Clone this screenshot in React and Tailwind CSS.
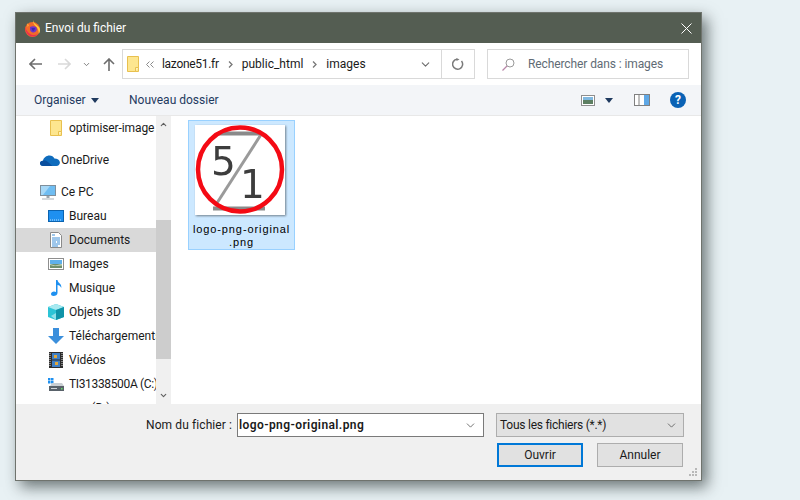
import React from "react";
import { ChevronDown } from "lucide-react";

const font = "[font-family:'Roboto','Open_Sans',sans-serif]";

/* small win10 style icons */
const FolderIcon = () => (
    <svg width="12" height="16" viewBox="0 0 12 16">
        <path d="M.5.5h11v15H.5z" fill="#fde68f" stroke="#e8c04f" />
        <path d="M8.500 15.500v-4h3" fill="#fff3c0" stroke="#e8c04f" />
    </svg>
);

const Firefox = () => (
    <svg width="17" height="17" viewBox="0 0 17 17">
        <circle cx="8.500" cy="9.500" r="7.500" fill="#f26a2a" />
        <path d="M9 0c.5 2 1 3 3 4.500 2 1.500 4 3 4 5.500 0 1.500-.5 2.800-1.200 3.800C15 9 12.500 7 11 5.500 9.500 4 9 2 9 0z" fill="#ffcb3a" />
        <path d="M1 7c0 5 3.500 9.500 7.500 9.500 2.500 0 4.500-1 6-2.800-3 2-6.500 1.800-9-.2C3.500 12 2 9.500 1 7z" fill="#ee2f4f" />
        <path d="M6 7c1.500-1 4.500-1 6 0 1 1 1 2.500.5 3.500-.8 1.700-2.800 2.300-4.300 1.700C6.800 11.600 6 10.500 6 9z" fill="#6f35c9" />
        <path d="M7.500 8h3.500l-.5 2-1.500 1.200L8 9.800z" fill="#3c2bb0" />
        <path d="M3 3.500c1 0 1.500 1 2 2L3.500 7z" fill="#ffa436" />
    </svg>
);

const OneDrive = () => (
    <svg width="20" height="11" viewBox="0 0 20 11">
        <path d="M3.500 11C1.200 11 0 9.600 0 8.200 0 6.900 1.200 5.900 3 5.700 3.600 2.600 6.500.5 9.400.5c2.400 0 4.100 1 5 2.900 3 0 5.300 1.500 5.500 3.800.1 2-1.500 3.800-3.500 3.800z" fill="#0f6cbd" />
        <path d="M3.500 11C1.200 11 0 9.600 0 8.200 0 6.900 1.200 5.900 3 5.700c2.300-.3 3.500.3 4.700 1l4.700 4.300z" fill="#0a4f9e" />
    </svg>
);

const Monitor = () => (
    <svg width="16" height="15" viewBox="0 0 16 15">
        <rect x=".5" y=".5" width="15" height="10" fill="#6fbdf2" stroke="#7f8f9c" />
        <path d="M1 1h9L3 10H1z" fill="#a7d8f7" />
        <path d="M6.500 11h3v2h-3z" fill="#9aa5ad" />
        <path d="M2 13.500h12v1H2z" fill="#aab2b8" />
    </svg>
);

const Desktop = () => (
    <svg width="16" height="12" viewBox="0 0 16 12">
        <rect x=".5" y=".5" width="15" height="11" fill="#1e90f0" stroke="#0b63b0" />
        <path d="M2 10h12" stroke="#bfe2fb" strokeDasharray="1 1" />
    </svg>
);

const DocIcon = () => (
    <svg width="12" height="16" viewBox="0 0 12 16">
        <path d="M.5.500h8l3 3v12H.500z" fill="#fff" stroke="#8a8a8a" />
        <path d="M2 3h3M2 6h8M2 8h8M2 10h4M7 10h3M2 12h8M2 14h6" stroke="#3f8fd8" />
    </svg>
);

const ImageIcon = () => (
    <svg width="16" height="12" viewBox="0 0 16 12">
        <rect x=".5" y=".5" width="15" height="11" fill="#fff" stroke="#8e8e8e" />
        <rect x="2" y="2" width="12" height="4" fill="#5fb0ea" />
        <path d="M2 6h12v4H2z" fill="#6f8f6b" />
        <path d="M2 6l5 1.500L14 6v1.500L6 8 2 7z" fill="#c9d8c2" />
    </svg>
);

const Music = () => (
    <svg width="11" height="16" viewBox="0 0 11 16">
        <path d="M5 0h1.500c.3 3 4.500 3.500 3.800 8C9.500 6 8 5 6.500 5v8c0 2-2 3-4 3-1.500 0-2.500-.8-2.500-2 0-1.500 1.500-2.500 3-2.500.8 0 1.500.2 2 .5z" fill="#1e90f0" />
    </svg>
);

const Cube = () => (
    <svg width="16" height="16" viewBox="0 0 16 16">
        <path d="M8 0l8 3v10l-8 3-8-3V3z" fill="#2cc4d6" />
        <path d="M8 0l8 3-8 3-8-3z" fill="#a8e9f0" />
        <path d="M8 6l8-3v10l-8 3z" fill="#0f93a8" />
        <path d="M3 12l5-3v7z" fill="#8fe0ea" />
    </svg>
);

const Download = () => (
    <svg width="16" height="16" viewBox="0 0 16 16">
        <path d="M5 0h6v8h5l-8 8-8-8h5z" fill="#3b8fdc" />
    </svg>
);

const Film = () => (
    <svg width="14" height="16" viewBox="0 0 14 16">
        <rect width="14" height="16" fill="#2b2b2b" />
        <rect x="3" y="1" width="8" height="6.500" fill="#3f7fc4" />
        <rect x="3" y="8.500" width="8" height="6.500" fill="#3f7fc4" />
        <path d="M5 3h3v3H5zM6 10h3v3H6z" fill="#e0a63a" />
        <path d="M1 1v14M13 1v14" stroke="#ddd" strokeDasharray="1 1" />
    </svg>
);

const Drive = () => (
    <svg width="16" height="15" viewBox="0 0 16 15">
        <path d="M0 1h2.500v2.500H0zM3 1h2.500v2.500H3zM0 4h2.500v2.500H0zM3 4h2.500v2.500H3z" fill="#1e90f0" />
        <path d="M2 9l2-3h10l2 3z" fill="#c9ced2" />
        <rect y="9" x="1" width="15" height="5" fill="#59626a" />
        <path d="M3 11.500h6" stroke="#cfd4d8" />
        <rect x="13" y="11" width="1.500" height="1.500" fill="#63e06a" />
    </svg>
);

const Logo = () => (
    <svg width="93" height="92" viewBox="0 0 93 92" className="drop-shadow-[1px_1px_1px_rgba(0,0,0,0.45)]">
        <rect width="90" height="90" fill="#fff" />
        <path d="M23 8.500h44M18 83.500h52" stroke="#8a8a8a" strokeWidth="4" />
        <path d="M67 8L22 78" stroke="#9a9a9a" strokeWidth="3" />
        <text x="16" y="50" fontSize="39" fill="#3d3d3d" fontFamily="DejaVu Sans" fontWeight="400">5</text>
        <text x="45" y="73" fontSize="39" fill="#3d3d3d" fontFamily="DejaVu Sans" fontWeight="400">1</text>
        <circle cx="45" cy="44.500" r="42" fill="none" stroke="#f40a14" strokeWidth="4.500" />
    </svg>
);

const treeRows = [
    { icon: <FolderIcon />, label: "optimiser-image", indent: "pl-[32px]", gap: "mb-2", text: "tracking-[-0.1px]" },
    { icon: <OneDrive />, label: "OneDrive", indent: "pl-[24px]", gap: "mb-2", col: "w-5 mr-[1px]" },
    { icon: <Monitor />, label: "Ce PC", indent: "pl-[24px]" },
    { icon: <Desktop />, label: "Bureau", indent: "pl-[32px]" },
    { icon: <DocIcon />, label: "Documents", indent: "pl-[32px]", active: true },
    { icon: <ImageIcon />, label: "Images", indent: "pl-[32px]" },
    { icon: <Music />, label: "Musique", indent: "pl-[32px]" },
    { icon: <Cube />, label: "Objets 3D", indent: "pl-[32px]" },
    { icon: <Download />, label: "Téléchargements", indent: "pl-[32px]" },
    { icon: <Film />, label: "Vidéos", indent: "pl-[32px]" },
    { icon: <Drive />, label: "TI31338500A (C:)", indent: "pl-[32px]", text: "tracking-[-0.35px]" },
    { icon: null, label: "nas (D:)", indent: "pl-[32px]" },
];

function TreeRow({ row }) {
    return (
        <div className={`h-6 shrink-0 flex items-center ${row.indent} ${row.gap || ""} ${row.active ? "bg-[#d9d9d9]" : ""}`}>
            <span className={`shrink-0 flex justify-center ${row.col || "w-4 mr-[5px]"}`}>{row.icon}</span>
            <span className={`whitespace-nowrap ${row.text || ""}`}>{row.label}</span>
        </div>
    );
}

export default function App() {
    return (
        <div className={`w-[800px] h-[500px] overflow-hidden bg-[#e8f1f4] pl-[15px] pt-[12px] text-xs text-[#1a1a1a] ${font}`}>
            <div className="w-[687px] h-[469px] flex flex-col border border-[#6f736d] bg-white shadow-[5px_6px_14px_rgba(40,50,50,0.65)]">
                {/* Title bar */}
                <div className="h-[30px] shrink-0 bg-[#545d52] flex items-center pl-[8px] pr-[9px] text-white">
                    <Firefox />
                    <span className="ml-[4px] flex-1">Envoi du fichier</span>
                    <svg width="11" height="11" viewBox="0 0 11 11">
                        <path d="M.5.5l10 10M10.500.500l-10 10" stroke="#fff" strokeWidth="1" />
                    </svg>
                </div>

                {/* Nav row */}
                <div className="h-[42px] shrink-0 flex items-center pl-[13px] pr-[12px]">
                    <svg width="13" height="12" viewBox="0 0 13 12">
                        <path d="M6 1L1 6l5 5M1 6h12" fill="none" stroke="#6d6d6d" strokeWidth="1.600" />
                    </svg>
                    <svg width="13" height="12" viewBox="0 0 13 12" className="ml-[16px]">
                        <path d="M7 1l5 5-5 5M12 6H0" fill="none" stroke="#d9d9d9" strokeWidth="1.600" />
                    </svg>
                    <ChevronDown size={9} strokeWidth={2.5} className="ml-[11px] text-[#7a7a7a]" />
                    <svg width="12" height="13" viewBox="0 0 12 13" className="ml-[12px]">
                        <path d="M1 6l5-5 5 5M6 1v12" fill="none" stroke="#6d6d6d" strokeWidth="1.600" />
                    </svg>
                    <div className="ml-[7px] w-[353px] h-[30px] border border-[#d9d9d9] flex items-center pl-[4px]">
                        <FolderIcon />
                        <svg width="8" height="7" viewBox="0 0 8 7" className="ml-[7px]">
                            <path d="M3.500.5L.5 3.500l3 3M7.500.5l-3 3 3 3" fill="none" stroke="#8a8a8a" />
                        </svg>
                        <span className="ml-[8px] tracking-[-0.3px]">lazone51.fr</span>
                        <svg width="5" height="7" viewBox="0 0 5 7" className="ml-[9px]"><path d="M1 .5l3 3-3 3" fill="none" stroke="#777" strokeWidth="1.300" /></svg>
                        <span className="ml-[9px]">public_html</span>
                        <svg width="5" height="7" viewBox="0 0 5 7" className="ml-[9px]"><path d="M1 .5l3 3-3 3" fill="none" stroke="#777" strokeWidth="1.300" /></svg>
                        <span className="ml-[9px] flex-1">images</span>
                        <ChevronDown size={13} strokeWidth={2} className="mr-[9px] text-[#6d6d6d]" />
                        <div className="w-[33px] h-full border-l border-[#d9d9d9] flex items-center justify-center">
                            <svg width="12" height="12" viewBox="0 0 12 12">
                                <path d="M9.500 3A5 5 0 1 1 5 1.200" fill="none" stroke="#7a7a7a" strokeWidth="1.500" />
                                <path d="M4.500 0l3 1.500-3 1.500z" fill="#7a7a7a" />
                            </svg>
                        </div>
                    </div>
                    <div className="ml-[12px] w-[202px] h-[30px] border border-[#d9d9d9] flex items-center pl-[14px] text-[#5f6b75]">
                        <svg width="13" height="13" viewBox="0 0 13 13">
                            <circle cx="8" cy="5" r="4" fill="none" stroke="#9a9a9a" />
                            <path d="M5 8l-4.500 4.500" stroke="#b886a8" strokeWidth="1.200" />
                        </svg>
                        <span className="ml-[13px] tracking-[-0.1px]">Rechercher dans : images</span>
                    </div>
                </div>

                {/* Toolbar */}
                <div className="h-[31px] shrink-0 bg-[#f3f5f8] border-b border-[#e8e8e8] flex items-center pl-[18px] pr-[15px] text-[#1f3a5f]">
                    <span className="w-[51px]">Organiser</span>
                    <svg width="8" height="5" viewBox="0 0 8 5" className="ml-[6px]"><path d="M0 0h8L4 5z" fill="#1f3a5f" /></svg>
                    <span className="ml-[30px] flex-1">Nouveau dossier</span>
                    <svg width="14" height="11" viewBox="0 0 14 11">
                        <rect x=".5" y=".5" width="13" height="10" fill="#fff" stroke="#8e8e8e" />
                        <rect x="2" y="2" width="10" height="3" fill="#7fb8e0" />
                        <rect x="2" y="5" width="10" height="4" fill="#5d7f62" />
                    </svg>
                    <svg width="8" height="5" viewBox="0 0 8 5" className="ml-[10px]"><path d="M0 0h8L4 5z" fill="#1f3a5f" /></svg>
                    <svg width="16" height="12" viewBox="0 0 16 12" className="ml-[21px]">
                        <rect x=".5" y=".5" width="15" height="11" fill="#fff" stroke="#808080" />
                        <path d="M5 0v12" stroke="#808080" />
                        <rect x="10" y="1" width="5" height="10" fill="#5fa8e6" />
                    </svg>
                    <div className="ml-[20px] w-4 h-4 rounded-full bg-[#0a62b5] flex items-center justify-center text-white text-[12px] font-bold leading-none">?</div>
                </div>

                {/* Content */}
                <div className="flex-1 min-h-0 flex">
                    <div className="w-[140px] shrink-0 overflow-hidden flex flex-col text-[#1a1a1a]">
                        {treeRows.map((row) => (
                            <TreeRow key={row.label} row={row} />
                        ))}
                    </div>
                    <div className="w-[15px] shrink-0 bg-[#f0f0f0] flex flex-col items-center">
                        <div className="h-[17px] flex items-center">
                            <ChevronDown size={9} strokeWidth={3} className="rotate-180 text-[#606060]" />
                        </div>
                        <div className="mt-[87px] w-full h-[139px] bg-[#cdcdcd]" />
                        <div className="mt-auto h-[17px] flex items-center">
                            <ChevronDown size={9} strokeWidth={3} className="text-[#606060]" />
                        </div>
                    </div>
                    <div className="flex-1 pl-[17px] pt-[4px]">
                        <div className="w-[107px] h-[130px] bg-[#cce8ff] border border-[#99d1ff] flex flex-col items-center pt-[4px]">
                            <Logo />
                            <div className="mt-[6px] text-center text-[11px] leading-[13px] font-medium tracking-[0.9px] text-black whitespace-nowrap [font-family:'Liberation_Sans',sans-serif]">
                                logo-png-original
                                <br />
                                .png
                            </div>
                        </div>
                    </div>
                </div>

                {/* Footer */}
                <div className="relative h-[76px] shrink-0 bg-[#f0f0f0] pt-[9px] pl-[130px]">
                    <div className="flex items-center h-6">
                        <span className="w-[86px] whitespace-nowrap tracking-[0.1px]">Nom du fichier :</span>
                        <div className="ml-[5px] w-[247px] h-6 border border-[#7a7a7a] bg-white flex items-center pl-[1px] pr-[6px] font-semibold">
                            <span className="flex-1 tracking-[0.4px]">logo-png-original.png</span>
                            <ChevronDown size={13} strokeWidth={1.5} className="text-[#555]" />
                        </div>
                        <div className="ml-[12px] w-[188px] h-6 border border-[#adadad] bg-[#e1e1e1] flex items-center pl-[3px] pr-[5px]">
                            <span className="flex-1 tracking-[-0.25px]">Tous les fichiers (*.*)</span>
                            <ChevronDown size={13} strokeWidth={1.5} className="text-[#555]" />
                        </div>
                    </div>
                    <div className="mt-[6px] ml-[351px] flex gap-[14px]">
                        <button className="w-[86px] h-6 border-2 border-[#0078d7] bg-[#e1e1e1]">Ouvrir</button>
                        <button className="w-[86px] h-6 border border-[#adadad] bg-[#e1e1e1]">Annuler</button>
                    </div>
                    {/* resize grip */}
                    <svg width="9" height="9" viewBox="0 0 9 9" className="absolute right-[3px] bottom-[3px]">
                        <path d="M6 0h2v2H6zM3 3h2v2H3zM6 3h2v2H6zM0 6h2v2H0zM3 6h2v2H3zM6 6h2v2H6z" fill="#b8b8b8" />
                    </svg>
                </div>
            </div>
        </div>
    );
}
